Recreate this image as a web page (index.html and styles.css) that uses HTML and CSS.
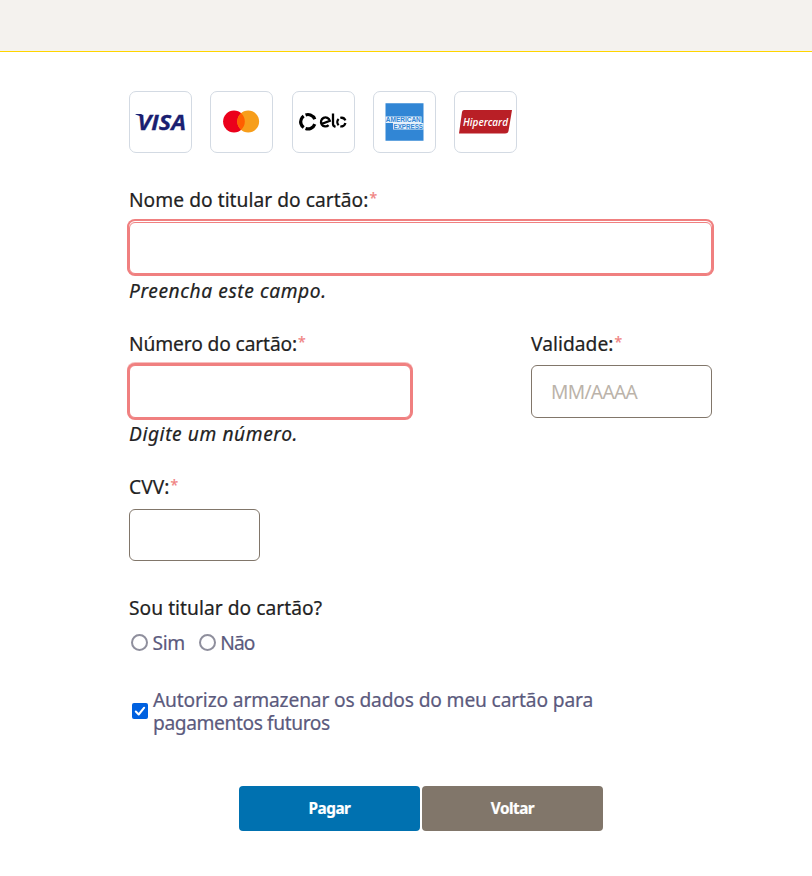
FILE: index.html
```html
<!DOCTYPE html>
<html lang="pt-BR">
<head>
<meta charset="utf-8">
<title>Pagamento</title>
<link rel="stylesheet" href="styles.css">
</head>
<body>
<header class="topbar"></header>
<main class="payment">
  <div class="brands">
    <div class="brand"><svg viewBox="0 0 63 62"><text class="visa" x="8.5" y="38.6" textLength="48.5" lengthAdjust="spacingAndGlyphs">VISA</text><path d="M6.500 23h6l1.500 4q-3-2.500-7.500-3.500z" fill="#1a1f71"/></svg></div>
    <div class="brand"><svg viewBox="0 0 63 62"><circle cx="24" cy="30.5" r="10.9" fill="#eb001b"/><circle cx="38.200" cy="30.5" r="10.9" fill="#f79e1b"/><path d="M31.100 22.3a10.9 10.9 0 0 1 0 16.4a10.9 10.9 0 0 1 0-16.4z" fill="#ff5f00"/></svg></div>
    <div class="brand"><svg viewBox="0 0 63 62"><g fill="none" stroke="#000"><circle cx="16" cy="30.700" r="7.200" stroke-width="3.200" pathLength="360" stroke-dasharray="90 17 106 17 90 40" transform="rotate(20 16 30.700)"/><g stroke-width="2.300"><path d="M29.500 33l8.300-3.300a4.500 4.500 0 1 0-1.200 4.500M41 22.500v10.500q0 2 2.500 2.800"/><path d="M46.600 34.200a4.400 4.400 0 0 1 0-6.200M48.300 26.900a4.400 4.400 0 0 1 5.100 2.500M53.400 32a4.400 4.400 0 0 1-5.100 3.300"/></g></g></svg></div>
    <div class="brand"><svg viewBox="0 0 63 62"><path d="M12.500 12.300h38v37.500h-38z" fill="#3186d5"/><path d="M12.500 25.500h36v6.500h2v6.500H20v-6.500h-7.500z" fill="#e5f0fa"/><text class="amex" x="12.800" y="31.300" textLength="35" lengthAdjust="spacingAndGlyphs">AMERICAN</text><text class="amex" x="20.500" y="37.800" textLength="29.500" lengthAdjust="spacingAndGlyphs">EXPRESS</text></svg></div>
    <div class="brand"><svg viewBox="0 0 63 62"><path d="M10 19h48L54.500 40q-.5 2.500-3.500 2.500H5L8 21q.4-2 2-2z" fill="#b91f26"/><text class="hiper" x="9" y="34.500" textLength="45" lengthAdjust="spacingAndGlyphs">Hipercard</text></svg></div>
  </div>
  <form class="form">
    <div class="field holder">
      <label class="label" for="nome"><span>Nome do titular do cartão:</span><span class="req">*</span></label>
      <input class="input invalid focused" id="nome" type="text">
      <p class="error">Preencha este campo.</p>
    </div>
    <div class="row">
      <div class="field number">
        <label class="label" for="numero"><span class="tight">Número do cartão:</span><span class="req">*</span></label>
        <input class="input invalid" id="numero" type="text">
        <p class="error">Digite um número.</p>
      </div>
      <div class="field expiry">
        <label class="label" for="validade"><span>Validade:</span><span class="req">*</span></label>
        <input class="input" id="validade" type="text" placeholder="MM/AAAA">
      </div>
    </div>
    <div class="field cvv">
      <label class="label" for="cvv"><span>CVV:</span><span class="req">*</span></label>
      <input class="input" id="cvv" type="text">
    </div>
    <div class="owner">
      <div class="label">Sou titular do cartão?</div>
      <div class="options">
        <label class="option"><span class="radio"></span><span>Sim</span></label>
        <label class="option"><span class="radio"></span><span class="nao">Não</span></label>
      </div>
    </div>
    <label class="consent">
      <svg class="check" viewBox="0 0 16 16"><rect width="16" height="16" rx="2" fill="#0061e0"/><path d="M3.800 8.500l2.900 3 5.500-6.800" fill="none" stroke="#fff" stroke-width="2" stroke-linecap="round" stroke-linejoin="round"/></svg>
      <span class="consent-text"><span class="line-one">Autorizo armazenar os dados do meu cartão para</span><span class="line-two">pagamentos futuros</span></span>
    </label>
    <div class="actions">
      <button class="btn pay" type="button">Pagar</button>
      <button class="btn back" type="button">Voltar</button>
    </div>
  </form>
</main>
</body>
</html>
```
FILE: styles.css
```css
* { box-sizing: border-box; }
body { margin: 0; background: #fff; color: #222; font: 19.2px/23px "Noto Sans", sans-serif; -webkit-text-stroke: .2px; }
.topbar { height: 52px; background: #f4f2ee; border-bottom: 1px solid #ffd400; }
.payment { width: 583px; margin: 39px 0 0 129px; }
.brands { display: flex; gap: 18.3px; }
.brand { width: 63px; height: 62px; border: 1px solid #d3dae3; border-radius: 7px; }
.brand svg { display: block; width: 63px; height: 62px; margin: -1px; -webkit-text-stroke: 0; }
.visa { font: italic 700 22px "Open Sans", sans-serif; fill: #1a1f71; stroke: #1a1f71; stroke-width: .3px; }
.amex { font: bold 6.6px "Liberation Sans", sans-serif; fill: #3186d5; }
.hiper { font: italic 600 10.8px "Open Sans", sans-serif; fill: #fff; }
.form { margin-top: 35px; }
.label { display: block; height: 23px; white-space: nowrap; letter-spacing: .04px; }
.tight { letter-spacing: -.12px; }
.req { color: #f08080; font-size: 14px; position: relative; top: -4px; margin-left: 1px; }
.input { display: block; width: 100%; height: 53px; margin: 10px 0 0; padding: 0 19px; border: 1px solid #81766a; border-radius: 6px; background: #fff; color: #222; font: 19.2px "Noto Sans", sans-serif; outline: 0; }
.input::placeholder { color: #bbb3aa; opacity: 1; letter-spacing: -.7px; -webkit-text-stroke: 0; }
.invalid { border-color: #f08080; box-shadow: 0 0 0 2px #f08080, 0 -1px 0 2px rgba(240, 128, 128, .5); }
.focused { height: 52px; margin-top: 11px; box-shadow: 0 -1px 0 0 #fff, 0 -1px 0 2px #f08080, 0 0 0 2px #f08080; }
.error { margin: 4px 0 0; height: 23px; font-style: italic; letter-spacing: .58px; white-space: nowrap; }
.focused + .error { margin-top: 5px; }
.row { display: flex; justify-content: space-between; margin-top: 30px; }
.number { width: 282px; }
.expiry { width: 181px; }
.cvv { width: 131px; margin-top: 30px; }
.cvv .input { height: 52px; margin-top: 11px; }
.owner { margin-top: 35px; }
.options { display: flex; gap: 12px; margin-top: 12px; color: #5b5a7d; }
.option { display: flex; align-items: center; gap: 4.5px; padding-left: 2px; letter-spacing: -.4px; }
.nao { letter-spacing: -.9px; }
.radio { width: 17px; height: 17px; border: 2px solid #8f8f9d; border-radius: 50%; }
.consent { display: flex; align-items: center; gap: 5px; margin-top: 34px; padding-left: 3px; color: #5b5a7d; }
.consent-text > span { display: block; white-space: nowrap; }
.line-one { letter-spacing: -.15px; }
.line-two { letter-spacing: -.4px; }
.check { width: 16px; height: 16px; flex: none; }
.actions { display: flex; gap: 2px; margin: 52px 0 0 110px; }
.btn { width: 181px; height: 45px; border: 0; border-radius: 4px; padding: 0 0 1px; color: #fff; font: bold 15.3px "Noto Sans", sans-serif; letter-spacing: -.5px; }
.pay { background: #0071b0; }
.back { background: #81766a; }
```
